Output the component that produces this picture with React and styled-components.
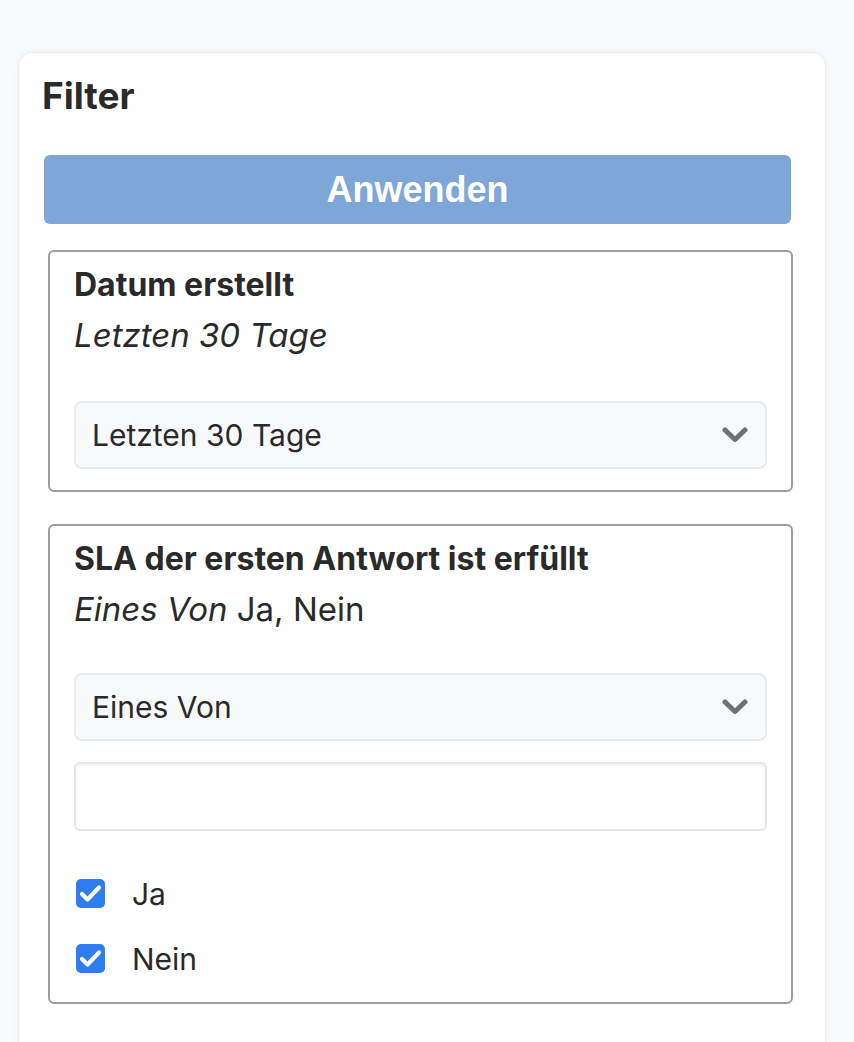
import React from 'react';
import styled, { createGlobalStyle } from 'styled-components';

const Global = createGlobalStyle`
  html, body { margin: 0; padding: 0; height: 100%; overflow: hidden; background: #f8f9fa; }
  body { font-family: Inter, "Noto Sans", sans-serif; color: #2a2a2a; }
  * { box-sizing: border-box; }
`;

const Page = styled.div`
  padding: 52px 28px 0 18px;
`;

const Card = styled.div`
  background: #fff;
  border: 1px solid #ececec;
  border-radius: 14px;
  box-shadow: 0 0 6px rgba(0, 0, 0, 0.04);
  padding: 21px 32px 60px 25px;
  display: flex;
  flex-direction: column;
`;

const Heading = styled.h2`
  margin: 0 0 0 -2px;
  font-size: 37px;
  line-height: 44px;
  font-weight: 700;
  color: #2a2a2a;
`;

const ApplyButton = styled.button`
  margin-top: 37px;
  width: calc(100% - 2px);
  height: 69px;
  border: none;
  border-radius: 6px;
  background: #7ea7d8;
  color: #fff;
  font-family: "Liberation Sans", Arial, sans-serif;
  font-weight: 700;
  font-size: 36px;
  cursor: pointer;
`;

const Section = styled.div`
  margin-top: ${p => p.$gap}px;
  margin-left: 4px;
  border: 2px solid #9d9d9d;
  border-radius: 6px;
  padding: 10px 24px 21px;
  display: flex;
  flex-direction: column;
`;

const SectionTitle = styled.div`
  font-size: 32px;
  line-height: 45px;
  font-weight: 700;
`;

const Summary = styled.div`
  margin-top: 6px;
  font-size: 33px;
  line-height: 45px;
  width: fit-content;
  overflow: hidden;
`;

const Em = styled.em`
  font-style: italic;
`;

const SelectBox = styled.div`
  margin-top: ${p => p.$gap}px;
  height: 68px;
  background: #f8f9fa;
  border: 2px solid #e9ecef;
  border-radius: 8px;
  padding: 0 17px 0 16px;
  display: flex;
  align-items: center;
  justify-content: space-between;
  font-size: 30px;
  color: #2a2a2a;
`;

const TextInput = styled.input`
  margin-top: 21px;
  height: 69px;
  width: 100%;
  border: 2px solid #e6e6e6;
  border-radius: 6px;
  box-shadow: inset 0 2px 3px rgba(0, 0, 0, 0.05);
  background: #fff;
  font-family: Inter, sans-serif;
  font-size: 30px;
  padding: 0 16px;
  outline: none;
`;

const CheckList = styled.div`
  margin: 48px 0 8px 2px;
  display: flex;
  flex-direction: column;
  gap: 36px;
`;

const CheckRow = styled.label`
  display: flex;
  align-items: center;
  gap: 27px;
  height: 29px;
  font-size: 30px;
  cursor: pointer;
`;

const Box = styled.span`
  width: 29px;
  height: 29px;
  border-radius: 5px;
  background: #2f7bf0;
  display: flex;
  align-items: center;
  justify-content: center;
  flex-shrink: 0;
`;

const Chevron = () => (
  <svg width="26" height="16" viewBox="0 0 26 16">
    <polyline points="3,3 13,12.5 23,3" fill="none" stroke="#6c7176" strokeWidth="5" strokeLinecap="round" strokeLinejoin="round" />
  </svg>
);

const Check = () => (
  <svg width="29" height="29" viewBox="0 0 29 29">
    <polyline points="6,15 11.5,20.5 23,8.5" fill="none" stroke="#fff" strokeWidth="4.2" strokeLinecap="round" strokeLinejoin="round" />
  </svg>
);

const Select = ({ value, gap }) => (
  <SelectBox $gap={gap}>
    <span>{value}</span>
    <Chevron />
  </SelectBox>
);

const Checkbox = ({ label }) => (
  <CheckRow>
    <Box><Check /></Box>
    <span>{label}</span>
  </CheckRow>
);

export default function App() {
  return (
    <>
      <Global />
      <Page>
        <Card>
          <Heading>Filter</Heading>
          <ApplyButton>Anwenden</ApplyButton>
          <Section $gap={26}>
            <SectionTitle>Datum erstellt</SectionTitle>
            <Summary><Em>Letzten 30 Tage</Em></Summary>
            <Select value="Letzten 30 Tage" gap={43} />
          </Section>
          <Section $gap={32}>
            <SectionTitle>SLA der ersten Antwort ist erfüllt</SectionTitle>
            <Summary><Em>Eines Von</Em> Ja, Nein</Summary>
            <Select value="Eines Von" gap={41} />
            <TextInput type="text" />
            <CheckList>
              <Checkbox label="Ja" />
              <Checkbox label="Nein" />
            </CheckList>
          </Section>
        </Card>
      </Page>
    </>
  );
}
